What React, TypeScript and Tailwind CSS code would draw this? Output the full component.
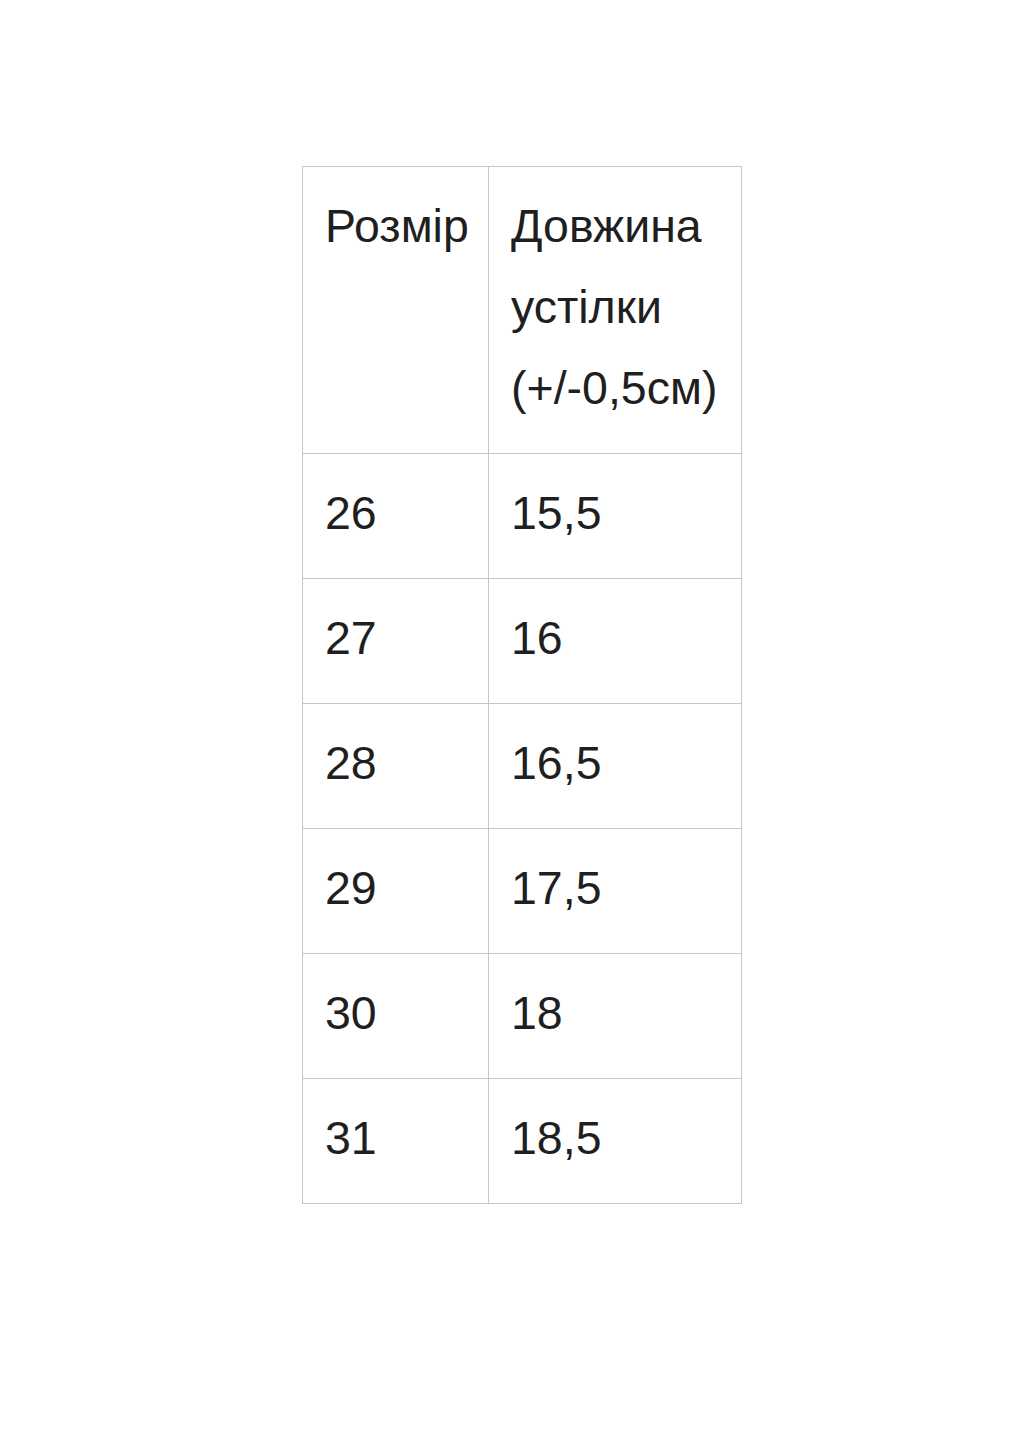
import React from "react";

const rows: [string, string][] = [
  ["26", "15,5"],
  ["27", "16"],
  ["28", "16,5"],
  ["29", "17,5"],
  ["30", "18"],
  ["31", "18,5"],
];

export default function App() {
  return (
    <div className="min-h-[1440px] w-[1035px] bg-white pt-[166px] pl-[302px]" style={{ fontFamily: '"Liberation Sans", Arial, sans-serif' }}>
      <table className="border-collapse text-[46.5px] leading-[81px] text-[#1f1f1f]">
        <tbody>
          <tr>
            <td className="w-[186px] border border-[#c6c6c6] pl-[22px] pr-[10px] pt-[19px] pb-[24px] align-top">Розмір</td>
            <td className="w-[253px] border border-[#c6c6c6] pl-[22px] pr-[10px] pt-[19px] pb-[24px] align-top">
              Довжина
              <br />
              устілки
              <br />
              (+/-0,5см)
            </td>
          </tr>
          {rows.map(([a, b]) => (
            <tr key={a}>
              <td className="border border-[#c6c6c6] pl-[22px] pt-[19px] pb-[24px] align-top">{a}</td>
              <td className="border border-[#c6c6c6] pl-[22px] pt-[19px] pb-[24px] align-top">{b}</td>
            </tr>
          ))}
        </tbody>
      </table>
    </div>
  );
}
